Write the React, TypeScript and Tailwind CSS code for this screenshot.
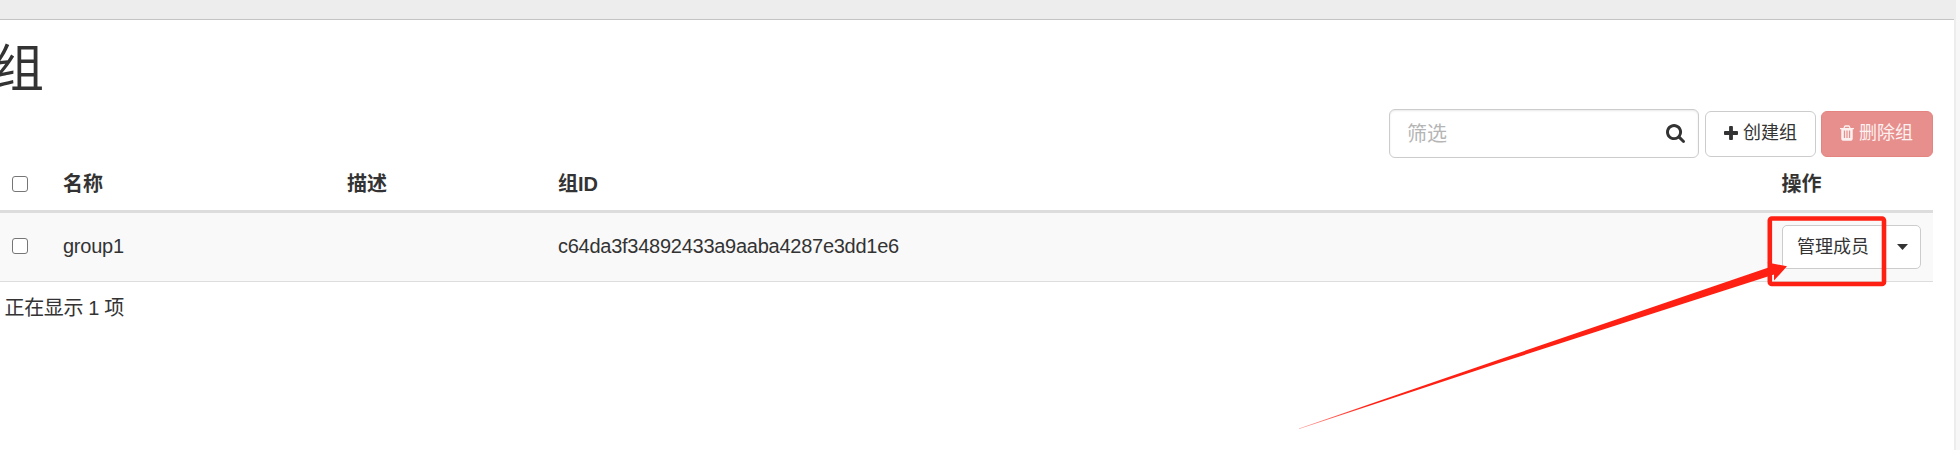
import React from 'react';

type IconProps = { className?: string };

const SearchIcon = ({ className }: IconProps) => (
  <svg viewBox="0 0 1664 1664" fill="currentColor" className={className}>
    <path d="M1152 704q0-185-131.5-316.5t-316.5-131.5-316.5 131.5-131.5 316.5 131.5 316.5 316.5 131.5 316.5-131.5 131.5-316.5zm512 832q0 52-38 90t-90 38q-54 0-90-38l-343-342q-179 124-399 124-143 0-273.5-55.5t-225-150-150-225-55.5-273.5 55.5-273.5 150-225 225-150 273.5-55.5 273.5 55.5 225 150 150 225 55.5 273.5q0 220-124 399l343 343q37 37 37 90z" />
  </svg>
);

const PlusIcon = ({ className }: IconProps) => (
  <svg viewBox="192 128 1408 1408" fill="currentColor" className={className}>
    <path d="M1600 736v192q0 40-28 68t-68 28h-416v416q0 40-28 68t-68 28h-192q-40 0-68-28t-28-68v-416h-416q-40 0-68-28t-28-68v-192q0-40 28-68t68-28h416v-416q0-40 28-68t68-28h192q40 0 68 28t28 68v416h416q40 0 68 28t28 68z" />
  </svg>
);

const TrashIcon = ({ className }: IconProps) => (
  <svg viewBox="192 128 1408 1536" fill="currentColor" className={className}>
    <path d="M704 1376v-704q0-14-9-23t-23-9h-64q-14 0-23 9t-9 23v704q0 14 9 23t23 9h64q14 0 23-9t9-23zm256 0v-704q0-14-9-23t-23-9h-64q-14 0-23 9t-9 23v704q0 14 9 23t23 9h64q14 0 23-9t9-23zm256 0v-704q0-14-9-23t-23-9h-64q-14 0-23 9t-9 23v704q0 14 9 23t23 9h64q14 0 23-9t9-23zm-544-992h448l-48-117q-7-9-17-11h-317q-10 2-17 11zm928 32v64q0 14-9 23t-23 9h-96v948q0 83-47 143.5t-113 60.5h-832q-66 0-113-58.5t-47-141.5v-952h-96q-14 0-23-9t-9-23v-64q0-14 9-23t23-9h309l70-167q15-37 54-63t79-26h320q40 0 79 26t54 63l70 167h309q14 0 23 9t9 23z" />
  </svg>
);

const Checkbox = () => (
  <input
    type="checkbox"
    className="block size-4 appearance-none rounded-[3px] border-[1.5px] border-[#767676] bg-white"
  />
);

const columns = 'grid grid-cols-[63px_284px_211px_1223.5px_1fr] items-center';

export default function App() {
  return (
    <div className="flex h-[450px] w-[1960px] overflow-hidden bg-[#f7f7f7] font-['Liberation_Sans','Noto_Sans_CJK_SC',sans-serif] text-[20px] text-[#333]">
      <div className="relative w-[1956px] shrink-0 border-r-2 border-[#ededed] bg-white">
        <header className="h-5 border-b border-[#c4c4c4] bg-[#ededed]" />
        <main className="w-[1933px]">
          <h1 className="-ml-[7px] h-[89px] pt-6 text-[51px] leading-[51px]">组</h1>

          <div className="flex h-[49px] items-center justify-end">
            <label className="mr-1.5 flex h-[49px] w-[310px] items-center justify-between rounded-md border border-[#ccc] bg-white pr-[13px] pl-[17px] shadow-[inset_0_1px_2px_rgba(0,0,0,0.09)]">
              <input
                placeholder="筛选"
                className="w-52 bg-transparent leading-6 outline-none placeholder:text-[#b5b5b5]"
              />
              <SearchIcon className="mb-px size-[19px]" />
            </label>
            <button className="mr-[5px] flex h-[46px] w-[111px] items-center rounded-md border border-[#ccc] bg-white pl-[18px] text-[18px]">
              <PlusIcon className="mr-[5px] mb-0.5 size-3.5" />
              创建组
            </button>
            <button className="flex h-[46px] w-[112px] items-center rounded-md border border-[#e48481] bg-[#e78f8c] pl-[18px] text-[18px] text-[#fcf1f1]">
              <TrashIcon className="mr-[5px] mb-0.5 h-4 w-3.5" />
              删除组
            </button>
          </div>

          <div className={`${columns} h-[55px] border-b-3 border-[#ddd] pb-px font-bold`}>
            <div className="pl-3"><Checkbox /></div>
            <div>名称</div>
            <div>描述</div>
            <div>组ID</div>
            <div>操作</div>
          </div>
          <div className={`${columns} h-[69px] border-b border-[#ddd] bg-[#f9f9f9]`}>
            <div className="pb-0.5 pl-3"><Checkbox /></div>
            <div className="pb-0.5 tracking-[-0.25px]">group1</div>
            <div />
            <div className="pb-0.5 tracking-[-0.26px]">c64da3f34892433a9aaba4287e3dd1e6</div>
            <div className="flex h-11 w-[139px] rounded-[5px] border border-[#ccc] bg-white">
              <button className="w-[102px] border-r border-[#ccc] text-[18px]">管理成员</button>
              <button className="flex flex-1 items-center justify-center">
                <svg viewBox="0 0 12 6" className="h-1.5 w-[11px]" fill="currentColor" preserveAspectRatio="none">
                  <path d="M0 0h12L6 6z" />
                </svg>
              </button>
            </div>
          </div>
          <div className="pt-[11px] pl-[4.5px] leading-[30px] tracking-[-0.35px]">正在显示 1 项</div>
        </main>

        <svg viewBox="0 0 1956 450" className="pointer-events-none absolute top-0 left-0 h-[450px] w-[1956px]">
          <defs>
            <linearGradient id="tail" gradientUnits="userSpaceOnUse" x1="1300" y1="0" x2="1370" y2="0">
              <stop offset="0" stopColor="#ff2014" stopOpacity="0.5" />
              <stop offset="1" stopColor="#ff2014" />
            </linearGradient>
          </defs>
          <rect x="1769.8" y="218.5" width="114.2" height="65.5" rx="2" fill="none" stroke="#ff2014" strokeWidth="4.6" />
          <path d="M1299 428.5L1500 359.3L1770 267L1767.5 262.5L1787 266.3L1774 280.5L1774 274.5L1500 362.8L1299 429Z" fill="url(#tail)" />
        </svg>
      </div>
    </div>
  );
}
